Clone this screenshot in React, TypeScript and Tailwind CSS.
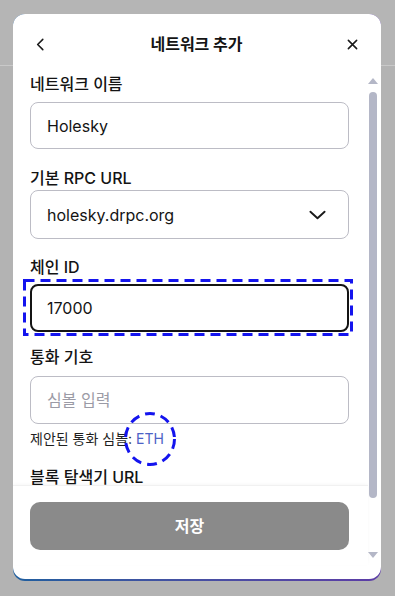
import React from 'react';

const font = { fontFamily: 'Inter, "Noto Sans CJK KR", "Noto Sans", sans-serif' };

function ChevronLeft() {
  return (
    <svg viewBox="0 0 10 14" className="h-[13px] w-[10px]" aria-hidden="true">
      <path d="M8 1.5 2.5 7 8 12.5" fill="none" stroke="#1a1a1a" strokeWidth="1.7" strokeLinecap="round" strokeLinejoin="round" />
    </svg>
  );
}

function CloseIcon() {
  return (
    <svg viewBox="0 0 12 12" className="h-[11px] w-[11px]" aria-hidden="true">
      <path d="M1.5 1.5 10.5 10.5M10.5 1.5 1.5 10.5" fill="none" stroke="#1a1a1a" strokeWidth="1.7" strokeLinecap="round" />
    </svg>
  );
}

function ChevronDown() {
  return (
    <svg viewBox="0 0 18 10" className="h-[10px] w-[17px]" aria-hidden="true">
      <path d="M1.5 1.5 9 8.5 16.5 1.5" fill="none" stroke="#1a1a1a" strokeWidth="2" strokeLinecap="round" strokeLinejoin="round" />
    </svg>
  );
}

function DashedCircle() {
  return (
    <svg
      viewBox="0 0 52 54"
      className="pointer-events-none absolute left-1/2 top-1/2 h-[54px] w-[52px] -translate-x-1/2 -translate-y-1/2"
      aria-hidden="true"
    >
      <ellipse cx="26" cy="27" rx="24.5" ry="25.5" fill="none" stroke="#1414ee" strokeWidth="3" strokeDasharray="10 6" />
    </svg>
  );
}

function DashedBox() {
  return (
    <svg
      viewBox="0 0 330 57"
      className="pointer-events-none absolute -left-[7px] -top-[5px] h-[57px] w-[330px]"
      aria-hidden="true"
    >
      <rect x="1.5" y="1.5" width="327" height="54" fill="none" stroke="#1414ee" strokeWidth="3" strokeDasharray="10 6" />
    </svg>
  );
}

function Scrollbar() {
  return (
    <div className="flex w-[10px] shrink-0 flex-col items-center">
      <svg viewBox="0 0 10 6" className="mt-[6px] h-[6px] w-[10px]" aria-hidden="true">
        <path d="M5 0 10 6H0Z" fill="#b4b7c7" />
      </svg>
      <div className="mt-[8px] h-[406px] w-[8px] rounded-full bg-[#b4b7c7]" />
      <div className="flex-1" />
      <svg viewBox="0 0 10 6" className="mb-[7px] h-[6px] w-[10px]" aria-hidden="true">
        <path d="M0 0H10L5 6Z" fill="#b4b7c7" />
      </svg>
    </div>
  );
}

export default function App() {
  return (
    <div
      style={font}
      className="h-[596px] w-full overflow-hidden bg-[linear-gradient(to_bottom,#b5b5b5_65px,#c9c9c9_65px,#c9c9c9_66px,#b3b3b3_66px)] px-[13px] pt-[14px]"
    >
      <div className="w-[368px] rounded-[12px] bg-gradient-to-r from-[#1d5e9e] to-[#5c3ca6] pb-[2px]">
        <div className="flex h-[565px] flex-col overflow-hidden rounded-[12px] bg-white">
          <header className="flex h-[58px] shrink-0 items-center justify-between pl-[22px] pr-[23px] pt-[2px]">
            <button type="button" aria-label="뒤로" className="flex h-6 w-6 items-center">
              <ChevronLeft />
            </button>
            <h1 className="text-[16px] font-bold text-[#141414]">네트워크 추가</h1>
            <button type="button" aria-label="닫기" className="flex h-6 w-6 items-center justify-end">
              <CloseIcon />
            </button>
          </header>

          <div className="flex h-[493px] shrink-0 pr-[3px]">
            <div className="flex w-[355px] shrink-0 flex-col">
              <div className="min-h-0 flex-1 overflow-hidden pl-[17px] pr-[19px]">
                <label className="block h-6 text-[16px] font-medium leading-6 text-[#141414]">네트워크 이름</label>
                <div className="mt-[6px] flex h-[47px] items-center rounded-[8px] border border-[#bcbcc5] px-[16px] text-[16px] text-[#141414]">
                  Holesky
                </div>

                <label className="mt-[17px] block h-6 text-[16px] font-medium leading-6 text-[#141414]">기본 RPC URL</label>
                <div className="flex h-[49px] items-center justify-between rounded-[8px] border border-[#bcbcc5] pl-[16px] pr-[22px] text-[16px] text-[#141414]">
                  <span>holesky.drpc.org</span>
                  <ChevronDown />
                </div>

                <label className="mt-[16px] block h-6 text-[16px] font-medium leading-6 text-[#141414]">체인 ID</label>
                <div className="relative mt-[5px]">
                  <div className="flex h-[48px] items-center rounded-[8px] border-2 border-[#141414] px-[15px] text-[16px] text-[#141414]">
                    17000
                  </div>
                  <DashedBox />
                </div>

                <label className="mt-[13px] block h-6 text-[16px] font-medium leading-6 text-[#141414]">통화 기호</label>
                <div className="mt-[7px] flex h-[48px] items-center rounded-[8px] border border-[#bcbcc5] px-[16px] text-[16px] text-[#9b9ba6]">
                  심볼 입력
                </div>
                <p className="mt-[5px] h-5 text-[14px] leading-5 text-[#1f1f1f]">
                  제안된 통화 심볼:{' '}
                  <span className="relative inline-block text-[#4c62c6]">
                    ETH
                    <DashedCircle />
                  </span>
                </p>

                <label className="mt-[16px] block h-6 text-[16px] font-medium leading-6 text-[#141414]">블록 탐색기 URL</label>
              </div>

              <div className="shrink-0 border-t border-[#f1f1f1] bg-white pb-[15px] pl-[17px] pr-[19px] pt-[16px] shadow-[0_-1px_3px_rgba(0,0,0,0.03)]">
                <button
                  type="button"
                  className="flex h-[48px] w-full items-center justify-center rounded-[10px] bg-[#8a8a8a] text-[16px] font-bold text-white"
                >
                  저장
                </button>
              </div>
            </div>
            <Scrollbar />
          </div>
        </div>
      </div>
    </div>
  );
}
